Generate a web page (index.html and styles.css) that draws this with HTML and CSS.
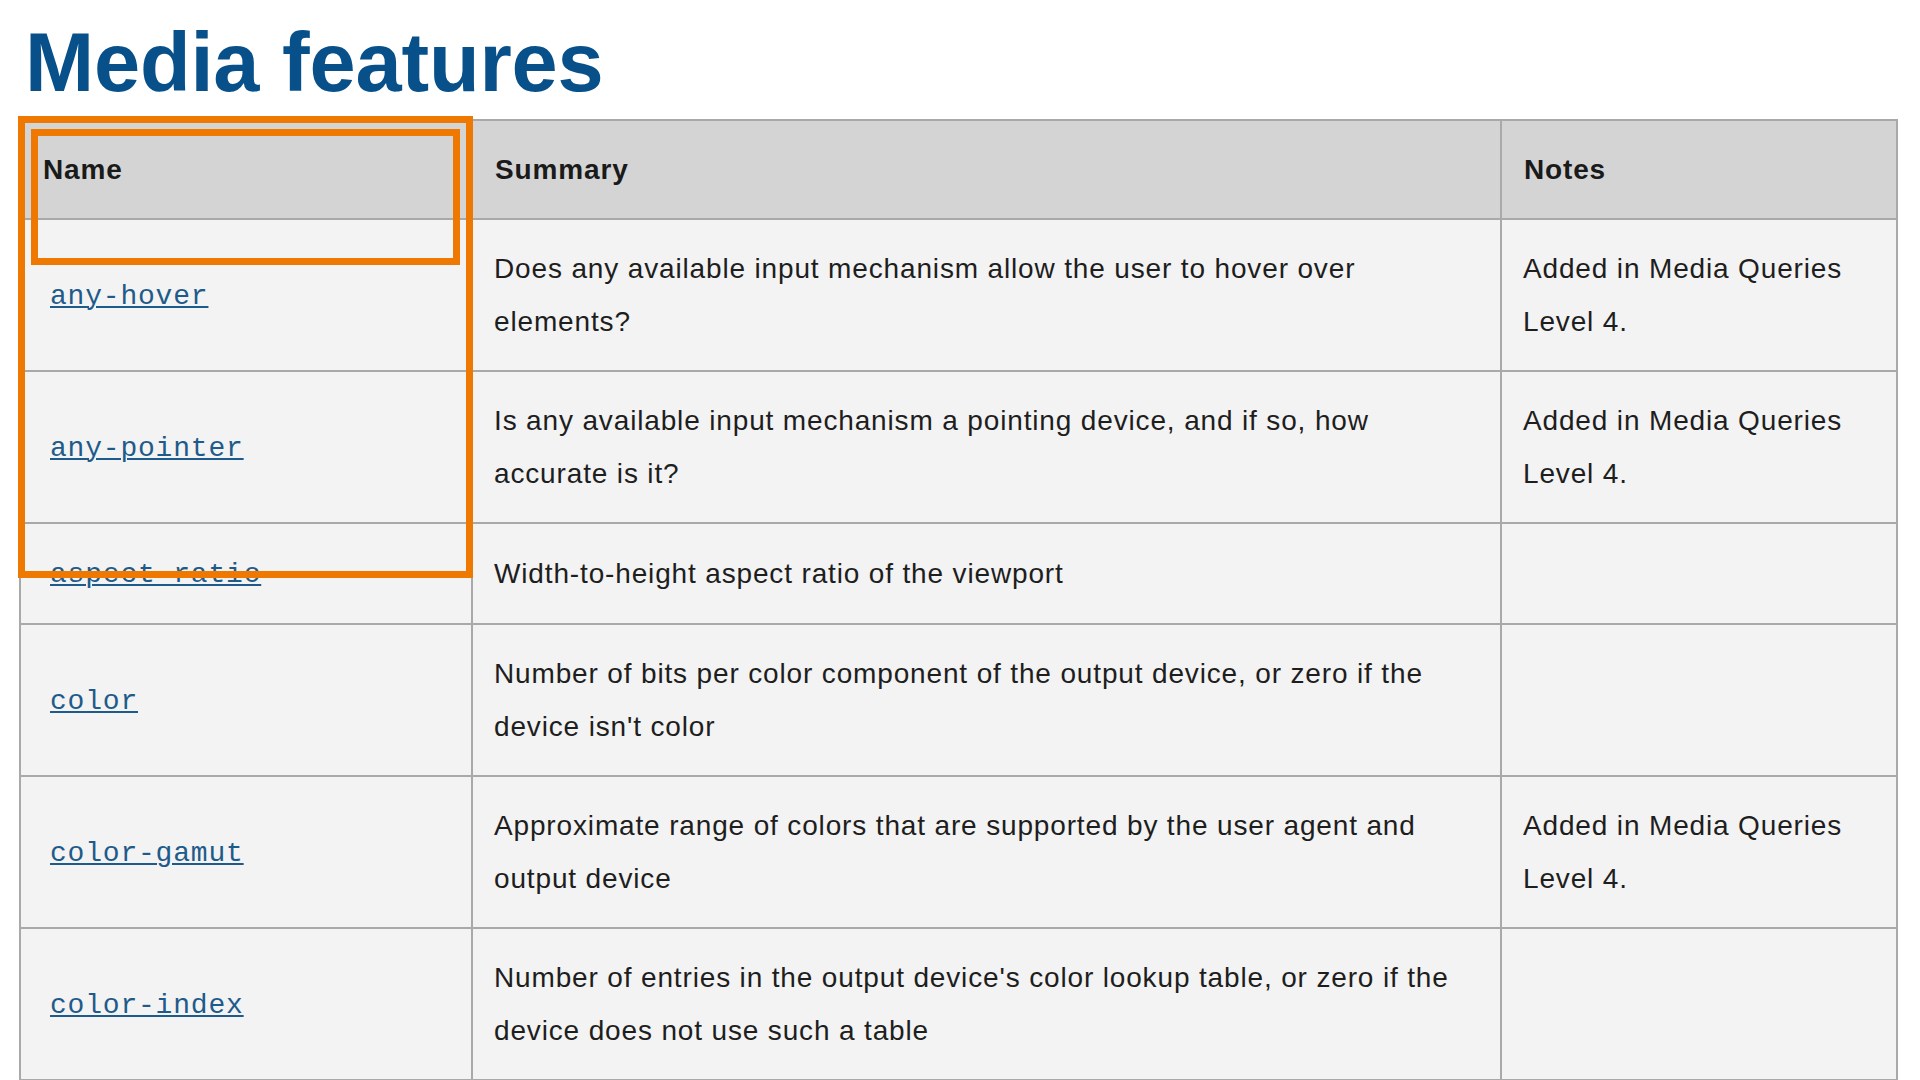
FILE: index.html
```html
<!DOCTYPE html>
<html lang="en">
<head>
<meta charset="utf-8">
<title>Media features</title>
<link rel="stylesheet" href="styles.css">
</head>
<body>
<main class="page">
  <h1 class="title">Media features</h1>
  <table class="features">
    <thead>
      <tr>
        <th class="col-name">Name</th>
        <th class="col-summary">Summary</th>
        <th class="col-notes">Notes</th>
      </tr>
    </thead>
    <tbody>
      <tr>
        <td class="name"><a class="feature-link" href="#"><code>any-hover</code></a></td>
        <td>Does any available input mechanism allow the user to hover over elements?</td>
        <td>Added in Media Queries Level 4.</td>
      </tr>
      <tr>
        <td class="name"><a class="feature-link" href="#"><code>any-pointer</code></a></td>
        <td>Is any available input mechanism a pointing device, and if so, how accurate is it?</td>
        <td>Added in Media Queries Level 4.</td>
      </tr>
      <tr>
        <td class="name"><a class="feature-link" href="#"><code>aspect-ratio</code></a></td>
        <td>Width-to-height aspect ratio of the viewport</td>
        <td></td>
      </tr>
      <tr>
        <td class="name"><a class="feature-link" href="#"><code>color</code></a></td>
        <td>Number of bits per color component of the output device, or zero if the device isn't color</td>
        <td></td>
      </tr>
      <tr>
        <td class="name"><a class="feature-link" href="#"><code>color-gamut</code></a></td>
        <td>Approximate range of colors that are supported by the user agent and output device</td>
        <td>Added in Media Queries Level 4.</td>
      </tr>
      <tr>
        <td class="name"><a class="feature-link" href="#"><code>color-index</code></a></td>
        <td>Number of entries in the output device's color lookup table, or zero if the device does not use such a table</td>
        <td></td>
      </tr>
    </tbody>
  </table>
  <div class="highlight highlight-outer"></div>
  <div class="highlight highlight-inner"></div>
</main>
</body>
</html>
```
FILE: styles.css
```css
html, body {
  margin: 0;
  padding: 0;
  background: #ffffff;
}

body {
  font-family: "Liberation Sans", Arial, Helvetica, sans-serif;
  color: #1c1c1c;
  overflow: hidden;
}

.page {
  position: relative;
  padding: 21px 0 0 19px;
}

.title {
  margin: 0 0 15px 0;
  padding-left: 6px;
  font-size: 83px;
  line-height: 83px;
  font-weight: 700;
  color: #08508a;
  letter-spacing: -0.2px;
}

.features {
  width: 1879px;
  table-layout: fixed;
  border-collapse: separate;
  border-spacing: 0;
  border-top: 2px solid #a9a9a9;
  border-left: 2px solid #a9a9a9;
  font-size: 28px;
  line-height: 53px;
  letter-spacing: 0.85px;
}

.features th,
.features td {
  box-sizing: border-box;
  padding: 22px 21px;
  border-right: 2px solid #a9a9a9;
  border-bottom: 2px solid #a9a9a9;
  text-align: left;
  vertical-align: middle;
}

.features th {
  background: #d4d4d4;
  font-weight: 700;
  color: #1a1a1a;
  padding-left: 22px;
}

.features td {
  background: #f3f3f3;
  font-weight: 400;
  color: #1e1e1e;
}

.col-name { width: 452px; }
.col-summary { width: 1029px; }
.col-notes { width: 396px; }

.features td.name {
  padding-left: 29px;
}

.feature-link {
  color: #1f5b8a;
  text-decoration: underline;
  text-decoration-thickness: 2px;
  text-underline-offset: 2px;
}

.feature-link code {
  font-family: "Liberation Mono", "Courier New", monospace;
  font-size: 28px;
  letter-spacing: 0.8px;
}

.highlight {
  position: absolute;
  box-sizing: border-box;
  border: 7px solid #ef7800;
  pointer-events: none;
}

.highlight-outer {
  left: 18px;
  top: 116px;
  width: 455px;
  height: 462px;
}

.highlight-inner {
  left: 31px;
  top: 129px;
  width: 429px;
  height: 136px;
}
```
